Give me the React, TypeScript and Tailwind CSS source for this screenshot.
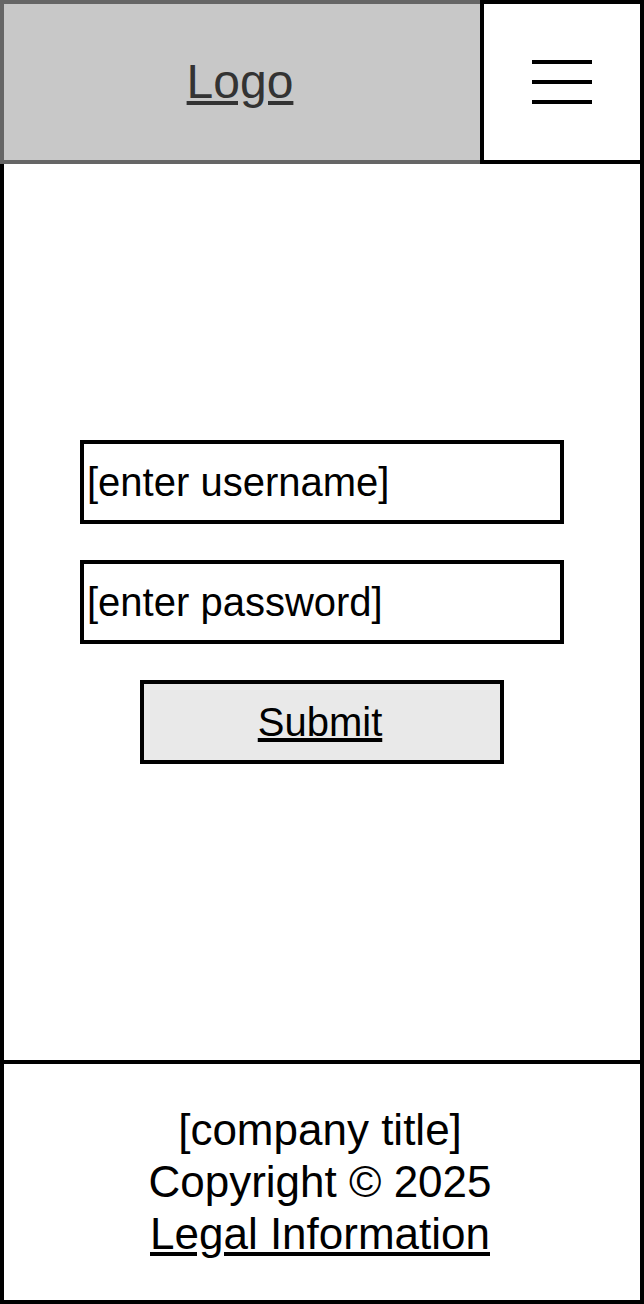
export default function App() {
  return (
    <div className="w-[644px] h-[1304px] flex flex-col bg-white font-['Liberation_Sans',Arial,sans-serif] text-black">
      <header className="flex h-[164px] shrink-0">
        <div className="w-[480px] border-l-4 border-t-4 border-b-4 border-[#666666] bg-[#c8c8c8] flex items-center justify-center pr-1">
          <span className="text-[48px] leading-none text-[#333333] underline">Logo</span>
        </div>
        <div className="w-[164px] border-4 border-black flex flex-col items-center justify-center gap-4">
          <div className="h-1 w-[60px] bg-black" />
          <div className="h-1 w-[60px] bg-black" />
          <div className="h-1 w-[60px] bg-black" />
        </div>
      </header>
      <main className="flex-1 border-x-4 border-black flex flex-col items-center pt-[276px]">
        <div className="w-[484px] h-[84px] border-4 border-black flex items-center pl-[3px] text-[40px] leading-none">
          [enter username]
        </div>
        <div className="mt-[36px] w-[484px] h-[84px] border-4 border-black flex items-center pl-[3px] text-[40px] leading-none">
          [enter password]
        </div>
        <div className="mt-[36px] w-[364px] h-[84px] border-4 border-black bg-[#e9e9e9] flex items-center justify-center pr-1 text-[40px] leading-none">
          <span className="underline">Submit</span>
        </div>
      </main>
      <footer className="h-[244px] shrink-0 border-4 border-black flex flex-col items-center justify-center pr-1 text-[44px] leading-[52px]">
        <div>[company title]</div>
        <div>Copyright © 2025</div>
        <div className="underline">Legal Information</div>
      </footer>
    </div>
  );
}
